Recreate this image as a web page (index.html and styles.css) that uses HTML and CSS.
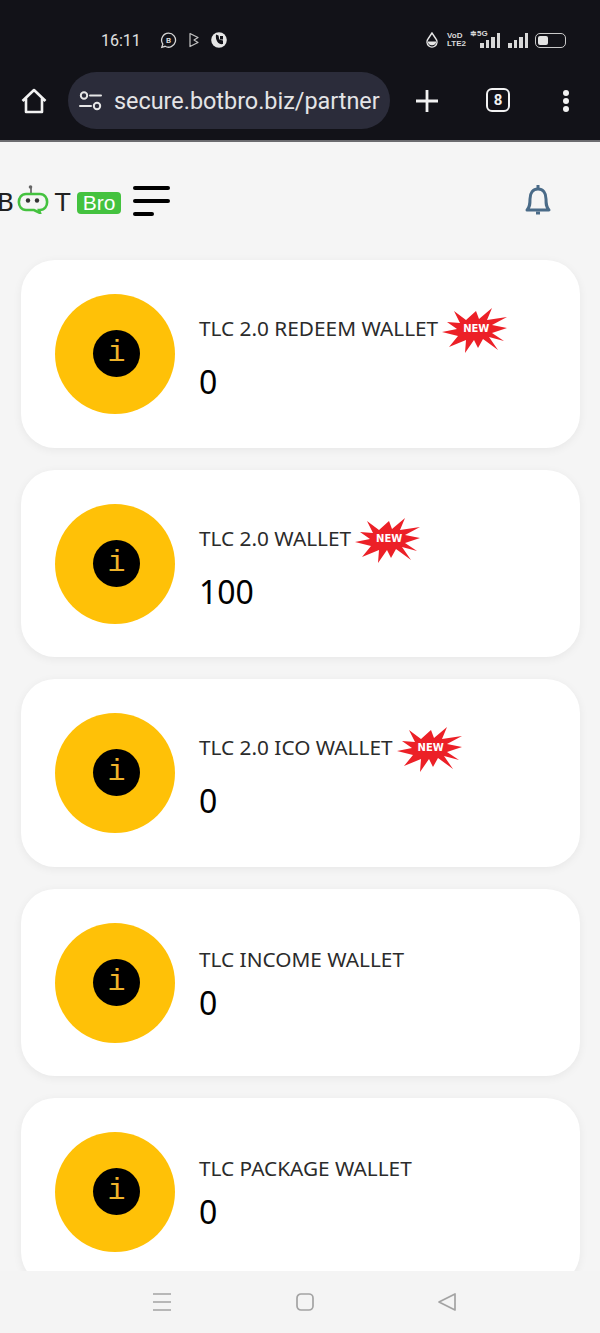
FILE: index.html
```html
<!DOCTYPE html>
<html lang="en">
<head>
  <meta charset="UTF-8" />
  <meta name="viewport" content="width=device-width, initial-scale=1.0" />
  <title>BotBro Wallets</title>
  <link rel="stylesheet" href="styles.css">
</head>
<body>
  <div class="phone">
    <div class="chrome">
      <div class="status-bar">
        <span class="time">16:11</span>
        <div class="status-apps">
          <svg width="17" height="17" viewBox="0 0 17 17" fill="none" stroke="#d6d6d6" stroke-width="1.3"><path d="M8.5 1.2a7 7 0 1 1-3.4 13.1l-3.3 1 1-3.2A7 7 0 0 1 8.5 1.2z"/><text x="8.6" y="11.2" class="mini-b">B</text></svg>
          <svg width="10" height="16" viewBox="0 0 10 16" fill="none" stroke="#c4c4c4" stroke-width="1.2" stroke-linejoin="round"><path d="M1 1.500l8 4-4 2.500 4 2.500-8 4z"/></svg>
          <svg width="16" height="16" viewBox="0 0 16 16"><circle cx="8" cy="8" r="7.800" fill="#e6e6e6"/><path d="M5 2.500l2.500 1 .5 2.500c0 1 .5 2 2 2l2 .5v3.500c-4 1-8-3-7-9.500z" fill="#121218"/><path d="M9 4h3v3.500H9z" fill="#121218"/></svg>
        </div>
        <div class="status-sys">
          <svg width="12" height="16" viewBox="0 0 12 16"><path d="M6 1L2 7a5 5 0 1 0 8 0z" fill="none" stroke="#e6e6e6" stroke-width="1.400"/><path d="M1.500 9.500h9a4.600 4.600 0 0 1-9 0z" fill="#e6e6e6"/></svg>
          <div class="volte"><span>VoD</span><span>LTE2</span></div>
          <div class="signal">
            <span class="net">≑5G</span>
            <i class="b1"></i><i class="b2"></i><i class="b3"></i><i class="b4"></i>
          </div>
          <div class="signal plain">
            <i class="b1"></i><i class="b2"></i><i class="b3"></i><i class="b4"></i>
          </div>
          <div class="battery"><div class="battery-fill"></div></div>
        </div>
      </div>
      <div class="toolbar">
        <svg class="home" width="28" height="28" viewBox="0 0 28 28" fill="none" stroke="#f2f2f2" stroke-width="2.600" stroke-linejoin="round"><path d="M2.500 14L14 3l11.500 11M6 11.500V25h16V11.500"/></svg>
        <div class="url-pill">
          <svg width="24" height="20" viewBox="0 0 24 20" fill="none" stroke="#e6e6e6" stroke-width="2"><circle cx="5" cy="4.500" r="3.200"/><path d="M11 4.500h11M1 15h11" stroke-linecap="round"/><circle cx="18" cy="15" r="3.200"/></svg>
          <span class="url">secure.botbro.biz/partner</span>
        </div>
        <svg class="plus" width="24" height="24" viewBox="0 0 24 24" stroke="#f2f2f2" stroke-width="2.800"><path d="M12 1v22M1 12h22"/></svg>
        <div class="tabs">8</div>
        <div class="dots"><i></i><i></i><i></i></div>
      </div>
    </div>

    <div class="page">
      <header class="site-header">
        <div class="logo">
          <span class="logo-letter letter-b">B</span>
          <svg width="34" height="30" viewBox="0 0 34 30" fill="none"><path d="M15 9V4" stroke="#555" stroke-width="1.500"/><circle cx="14.500" cy="3" r="1.800" fill="#666"/><path d="M10 10h14c9.500 0 9.500 16 0 16h-1l1 3-6-3h-8C.500 26 .500 10 10 10z" stroke="#44c23f" stroke-width="2.600"/><circle cx="12" cy="16.500" r="2.200" fill="#333"/><circle cx="21" cy="16.500" r="2.200" fill="#333"/></svg>
          <span class="logo-letter letter-t">T</span>
          <span class="logo-tag">Bro</span>
        </div>
        <div class="menu-btn"><i></i><i></i><i class="short"></i></div>
        <svg class="bell" width="30" height="34" viewBox="0 0 30 34" fill="none" stroke="#4a6b88" stroke-width="3" stroke-linejoin="round"><path d="M15 2v3"/><path d="M4 27c3-3 3-6 3-11 0-6 3-10 8-10s8 4 8 10c0 5 0 8 3 11z"/><path d="M13 30h4" /></svg>
      </header>

      <main class="wallets">
        <section class="card">
          <div class="coin"><div class="coin-dot">i</div></div>
          <div class="card-body">
            <div class="card-title has-badge">
              <span class="label">TLC 2.0 REDEEM WALLET</span>
              <div class="new-badge">
                <svg width="66" height="46" viewBox="0 0 66 46"><polygon fill="#ec2027" points="12,4 24,13 34,4 37,12 50,1 45,13 65,10 50,18 65,21 50,26 62,34 47,30 56,43 41,32 36,41 32,33 23,46 24,33 7,40 16,29 0,25 15,22 5,15 18,16"/></svg>
                <span>NEW</span>
              </div>
            </div>
            <div class="amount">0</div>
          </div>
        </section>

        <section class="card">
          <div class="coin"><div class="coin-dot">i</div></div>
          <div class="card-body">
            <div class="card-title has-badge">
              <span class="label">TLC 2.0 WALLET</span>
              <div class="new-badge">
                <svg width="66" height="46" viewBox="0 0 66 46"><polygon fill="#ec2027" points="12,4 24,13 34,4 37,12 50,1 45,13 65,10 50,18 65,21 50,26 62,34 47,30 56,43 41,32 36,41 32,33 23,46 24,33 7,40 16,29 0,25 15,22 5,15 18,16"/></svg>
                <span>NEW</span>
              </div>
            </div>
            <div class="amount">100</div>
          </div>
        </section>

        <section class="card">
          <div class="coin"><div class="coin-dot">i</div></div>
          <div class="card-body">
            <div class="card-title has-badge">
              <span class="label">TLC 2.0 ICO WALLET</span>
              <div class="new-badge">
                <svg width="66" height="46" viewBox="0 0 66 46"><polygon fill="#ec2027" points="12,4 24,13 34,4 37,12 50,1 45,13 65,10 50,18 65,21 50,26 62,34 47,30 56,43 41,32 36,41 32,33 23,46 24,33 7,40 16,29 0,25 15,22 5,15 18,16"/></svg>
                <span>NEW</span>
              </div>
            </div>
            <div class="amount">0</div>
          </div>
        </section>

        <section class="card">
          <div class="coin"><div class="coin-dot">i</div></div>
          <div class="card-body">
            <div class="card-title">
              <span class="label">TLC INCOME WALLET</span>
            </div>
            <div class="amount">0</div>
          </div>
        </section>

        <section class="card">
          <div class="coin"><div class="coin-dot">i</div></div>
          <div class="card-body">
            <div class="card-title">
              <span class="label">TLC PACKAGE WALLET</span>
            </div>
            <div class="amount">0</div>
          </div>
        </section>
      </main>
    </div>

    <nav class="nav-bar">
      <svg width="20" height="20" viewBox="0 0 20 20" stroke="#a3a3a3" stroke-width="1.700"><path d="M1 2h18M1 10h18M1 18h18"/></svg>
      <svg width="20" height="20" viewBox="0 0 20 20" fill="none" stroke="#a3a3a3" stroke-width="1.700"><rect x="2" y="2" width="16" height="16" rx="4"/></svg>
      <svg width="20" height="20" viewBox="0 0 20 20" fill="none" stroke="#a3a3a3" stroke-width="1.700" stroke-linejoin="round"><path d="M18 2v16L2 10z"/></svg>
    </nav>
  </div>
</body>
</html>
```

FILE: styles.css
```css
body {
  margin: 0;
  font-family: 'Noto Sans', sans-serif;
  background: #f5f5f5;
}

.phone {
  width: 600px;
  height: 1333px;
  display: flex;
  flex-direction: column;
  overflow: hidden;
}

/* browser chrome */
.chrome {
  background: #121218;
  border-bottom: 2px solid #6c6c70;
  height: 140px;
  flex-shrink: 0;
}

.status-bar {
  height: 72px;
  display: flex;
  align-items: center;
  padding: 8px 34px 0 101px;
  box-sizing: border-box;
  color: #e0e0e0;
}

.time {
  font-family: 'Roboto', sans-serif;
  font-size: 16px;
  width: 59px;
}

.status-apps {
  display: flex;
  align-items: center;
  gap: 12px;
}

.mini-b {
  font-family: 'Roboto', sans-serif;
  font-size: 8px;
  font-weight: 700;
  text-anchor: middle;
  fill: #d6d6d6;
  stroke: none;
}

.status-sys {
  margin-left: auto;
  display: flex;
  align-items: center;
  gap: 6px;
}

.volte {
  display: flex;
  flex-direction: column;
  font-family: 'Liberation Sans', sans-serif;
  font-size: 8px;
  font-weight: 700;
  line-height: 8px;
  color: #d8d8d8;
  width: 18px;
  margin-left: 3px;
  white-space: nowrap;
}

.signal {
  display: flex;
  align-items: flex-end;
  gap: 2px;
  height: 15px;
  position: relative;
  padding-left: 9px;
}

.signal.plain {
  padding-left: 0;
  margin-left: 2px;
}

.signal i {
  display: block;
  width: 3.500px;
  background: #d8d8d8;
}

.signal .b1 { height: 5px; }
.signal .b2 { height: 8px; }
.signal .b3 { height: 11px; }
.signal .b4 { height: 15px; }

.net {
  position: absolute;
  left: -1px;
  top: -4px;
  font-family: 'Liberation Sans', sans-serif;
  font-size: 8px;
  font-weight: 700;
  color: #d8d8d8;
  white-space: nowrap;
}

.battery {
  width: 25px;
  height: 9px;
  border: 1.500px solid #c9c9c9;
  border-radius: 5px;
  padding: 2px;
  margin-left: 1px;
}

.battery-fill {
  width: 10px;
  height: 100%;
  background: #e3e3e3;
  border-radius: 2px;
}

.toolbar {
  height: 68px;
  display: flex;
  align-items: flex-start;
  padding-left: 20px;
}

.home {
  margin-top: 15px;
}

.url-pill {
  width: 322px;
  height: 57px;
  margin-left: 20px;
  background: #2b2c3a;
  border-radius: 29px;
  display: flex;
  align-items: center;
  gap: 11px;
  padding-left: 11px;
  box-sizing: border-box;
  overflow: hidden;
}

.url {
  font-family: 'Roboto', sans-serif;
  font-size: 23.400px;
  color: #e4e4e6;
  white-space: nowrap;
}

.plus {
  margin: 17px 0 0 25px;
}

.tabs {
  width: 20px;
  height: 20px;
  margin: 16px 0 0 47px;
  border: 2.500px solid #f2f2f2;
  border-radius: 6px;
  color: #f2f2f2;
  font-family: 'Roboto', sans-serif;
  font-size: 15px;
  font-weight: 700;
  line-height: 20px;
  text-align: center;
}

.dots {
  margin: 18px 0 0 53px;
  display: flex;
  flex-direction: column;
  gap: 2px;
}

.dots i {
  display: block;
  width: 6px;
  height: 6px;
  border-radius: 50%;
  background: #f2f2f2;
}

/* page */
.page {
  flex: 1;
  min-height: 0;
  overflow: hidden;
}

.site-header {
  height: 118px;
  display: flex;
  align-items: center;
  box-sizing: border-box;
  padding: 0 47px 0 0;
}

.logo {
  display: flex;
  align-items: center;
  height: 50px;
  width: 121px;
  flex-shrink: 0;
}

.logo-letter {
  font-family: 'DejaVu Sans', sans-serif;
  font-size: 25px;
  line-height: 28px;
  color: #222;
  margin-top: 4px;
}

.letter-b {
  margin-left: -3px;
}

.logo svg {
  margin: -5px 0 0 2px;
  flex-shrink: 0;
}

.letter-t {
  width: 19px;
  margin-left: 3px;
  text-align: center;
}

.logo-tag {
  width: 44px;
  margin: 4px 0 0 5px;
  background: #44c23f;
  color: #fff;
  font-family: 'Liberation Sans', sans-serif;
  font-size: 21px;
  line-height: 22px;
  text-align: center;
  border-radius: 4px;
  flex-shrink: 0;
}

.menu-btn {
  margin-left: 12px;
  display: flex;
  flex-direction: column;
  gap: 9px;
  width: 37px;
}

.menu-btn i {
  display: block;
  height: 4px;
  border-radius: 2px;
  background: #000;
}

.menu-btn .short {
  width: 21px;
}

.bell {
  margin-left: auto;
  margin-top: -3px;
}

.wallets {
  padding: 0 20px 0 21px;
  display: flex;
  flex-direction: column;
  gap: 22px;
}

.card {
  background: #fff;
  border-radius: 34px;
  padding: 34px 34px 33.500px;
  display: flex;
  gap: 24px;
  box-shadow: 0 2px 10px rgba(0, 0, 0, 0.06);
  flex-shrink: 0;
}

.coin {
  width: 120px;
  height: 120px;
  border-radius: 50%;
  background: #ffc107;
  display: flex;
  align-items: center;
  justify-content: center;
  flex-shrink: 0;
}

.coin-dot {
  width: 47px;
  height: 47px;
  margin: -1px 0 0 3px;
  border-radius: 50%;
  background: #000;
  color: #eeb32b;
  font-family: 'Liberation Mono', monospace;
  font-size: 30px;
  line-height: 47px;
  text-align: center;
}

.card-body {
  margin-top: 13px;
}

.card-title {
  display: flex;
  align-items: flex-start;
  min-height: 38px;
}

.label {
  font-size: 20.800px;
  line-height: 30px;
  padding-top: 8px;
  color: #2b2b2b;
  white-space: nowrap;
}

.has-badge .label {
  padding-top: 6px;
}

.new-badge {
  position: relative;
  width: 66px;
  height: 46px;
  margin-left: 4px;
}

.new-badge svg {
  display: block;
}

.new-badge span {
  position: absolute;
  left: 21px;
  top: 16px;
  font-family: 'DejaVu Sans', sans-serif;
  font-size: 10px;
  font-weight: 700;
  line-height: 12px;
  color: #fff;
}

.amount {
  font-size: 32px;
  line-height: 58px;
  color: #000;
}

.nav-bar {
  height: 62px;
  flex-shrink: 0;
  background: #f4f4f4;
  display: flex;
  align-items: center;
  justify-content: space-between;
  padding: 0 143px 0 152px;
}
```
